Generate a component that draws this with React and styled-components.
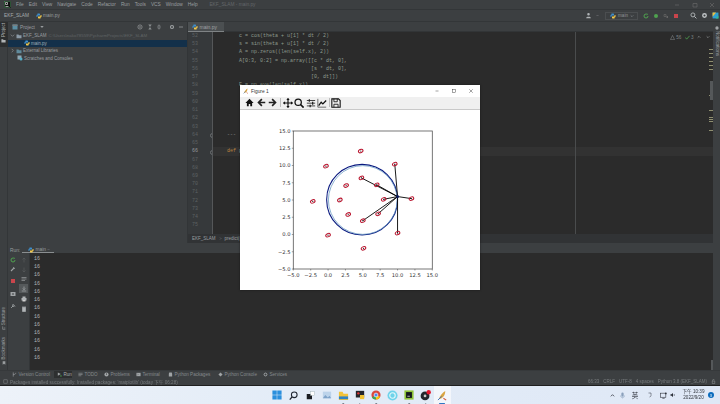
import React from "react";
import styled, { createGlobalStyle } from "styled-components";

const Global = createGlobalStyle`
  html, body { margin: 0; padding: 0; background: #3c3f41; overflow: hidden; }
  * { box-sizing: border-box; }
`;

const UI = `"Liberation Sans", "Noto Sans CJK TC", sans-serif`;
const MONO = `"Liberation Mono", monospace`;

const Screen = styled.div`
  position: relative; width: 720px; height: 404px; display: flex; flex-direction: column;
  overflow: hidden; font-family: ${UI}; color: #9a9ea0; filter: blur(0.35px);
`;
const Ide = styled.div`height: 385px; display: flex; flex-direction: column; background: #3c3f41;`;
const TitleBar = styled.div`
  height: 10px; flex: none; display: flex; align-items: center; padding-left: 4px;
  font-size: 4.8px; border-bottom: 1px solid #333638;
`;
const Menu = styled.div`display: flex; gap: 5px; margin-left: 5px;`;
const WinTitle = styled.span`margin-left: 11.7px; color: #63676a;`;
const WinControls = styled.div`margin-left: auto; display: flex; gap: 11.5px; padding-right: 5px; align-items: center;`;
const NavBar = styled.div`
  height: 12px; flex: none; display: flex; align-items: center; padding-left: 4px; font-size: 4.8px;
  border-bottom: 1px solid #333638; gap: 1px;
`;
const NavCrumb = styled.span`margin-right: 6px; color: #a6aaac;`;
const NavRight = styled.div`margin-left: auto; display: flex; align-items: center; gap: 4px; padding-right: 1px;`;
const NavSpacer = styled.span`width: 0; margin-left: 3px;`;
const RunConfig = styled.div`
  width: 33px; height: 8px; display: flex; align-items: center; gap: 2px; padding-left: 4px;
  margin: 0 1px 0 2px; border: 1px solid #4b4e50; font-size: 4.6px; color: #8f9395;
`;
const Main = styled.div`flex: 1; min-height: 0; display: flex;`;
const LeftStrip = styled.div`
  width: 8px; flex: none; display: flex; flex-direction: column; align-items: center; font-size: 4.5px;
  padding-bottom: 5px; border-right: 1px solid #333638;
`;
const ProjectTab = styled.div`
  width: 8px; height: 25px; background: #2c2e2f; display: flex; flex-direction: column; align-items: center; gap: 1px; padding-top: 1px; color: #b0b4b6;
`;
const VText = styled.span`writing-mode: vertical-rl; transform: rotate(180deg); line-height: 7px; white-space: nowrap;`;
const StripBottom = styled.div`margin-top: auto; display: flex; flex-direction: column; align-items: center; gap: 7px;`;
const StripItem = styled.div`display: flex; flex-direction: column; align-items: center; gap: 1px;`;
const Center = styled.div`flex: 1; min-width: 0; display: flex; flex-direction: column;`;
const TopSplit = styled.div`height: 221px; flex: none; display: flex;`;
const ProjectPanel = styled.div`width: 180px; flex: none; display: flex; flex-direction: column; font-size: 4.5px; border-right: 1px solid #323537;`;
const PanelHead = styled.div`height: 10px; display: flex; align-items: center; padding-left: 4px; gap: 2px; color: #9a9ea0; font-size: 4.8px;`;
const PanelIcons = styled.div`margin-left: auto; display: flex; gap: 3.4px; padding-right: 3px; align-items: center;`;
const TreeRow = styled.div`
  height: 7.5px; display: flex; align-items: center; white-space: nowrap;
  padding-left: ${p => p.$pad}px; gap: 1px; background: ${p => (p.$sel ? "#13304a" : "transparent")};
  color: ${p => (p.$sel ? "#a3b0ba" : "#9a9ea0")};
`;
const TreePath = styled.span`color: #5f6365; margin-left: 1px; font-size: 4.4px;`;
const Editor = styled.div`flex: 1; min-width: 0; display: flex; flex-direction: column;`;
const TabRow = styled.div`height: 10px; flex: none; display: flex; border-bottom: 1px solid #323537;`;
const EditorTab = styled.div`
  width: 36px; height: 10px; background: #4b4f51; display: flex; align-items: center; gap: 1.5px; padding-left: 4px;
  font-size: 5px; color: #a0a4a6; border-bottom: 1.5px solid #7f8385;
`;
const EditorBody = styled.div`flex: 1; min-height: 0; display: flex; overflow: hidden; background: #2b2b2b;`;
const Gutter = styled.div`
  width: 25px; flex: none; background: #36393b; border-right: 1px solid #555759;
  font: 5px/8.24px ${MONO}; padding-left: 4px; color: #5d6163; overflow: hidden;
`;
const GutterNum = styled.div`
  height: 8.24px; position: relative; color: ${p => (p.$active ? "#9a9ea0" : "#5d6163")};
  &::after {
    content: ""; display: ${p => (p.$fold ? "block" : "none")}; position: absolute; left: 17.5px; top: 2.5px;
    width: 3px; height: 3px; border: 0.6px solid #6d7072; border-radius: 50%; background: #36393b;
  }
`;
const Code = styled.div`
  flex: 1; min-width: 0; position: relative; font: 5px/8.24px ${MONO}; color: #8e9b8f; white-space: pre; padding-left: 2px;
`;
const CodeLine = styled.div`
  height: 8.24px; margin-left: -2px; padding-left: 2px;
  background: ${p => (p.$active ? "#323232" : "transparent")};
`;
const Keyword = styled.span`color: #b9823f;`;
const Margin = styled.div`position: absolute; left: 362px; top: 0; bottom: 0; width: 1px; background: #4a4c4d;`;
const Inspect = styled.div`
  position: absolute; right: 3px; top: 1px; height: 8px; display: flex; align-items: center; gap: 1.5px; font: 4.6px ${UI}; color: #7f8385;
`;
const InspectGroup = styled.span`display: flex; align-items: center; gap: 1px; margin-right: 2px;`;
const InspectGap = styled.span`width: 2px;`;
const Markers = styled.svg`position: absolute; right: 0; top: 0; width: 4px; height: 200px;`;
const Crumbs = styled.div`
  height: 9px; flex: none; display: flex; align-items: center; gap: 3px; padding-left: 4px; background: #313335; font-size: 4.5px; color: #9a9ea0;
`;
const RunPanel = styled.div`flex: 1; min-height: 0; display: flex; flex-direction: column;`;
const RunHead = styled.div`height: 10px; flex: none; padding-top: 4px; display: flex; font-size: 4.8px; color: #9a9ea0; align-items: center;`;
const RunLabel = styled.span`margin-left: 2px; width: 12px;`;
const RunTab = styled.div`
  width: 32px; height: 6px; display: flex; align-items: center; gap: 1.5px; padding-left: 6px;
  border-bottom: 1px solid #8a8e90;
`;
const RunBody = styled.div`flex: 1; min-height: 0; display: flex;`;
const ToolCol = styled.div`
  width: ${p => p.$w}px; flex: none; display: flex; flex-direction: column; align-items: center;
  padding-top: 2px; border-right: ${p => (p.$line ? "1px solid #333638" : "none")};
`;
const ToolIcon = styled.div`
  width: 9px; height: 9px; flex: none; display: flex; align-items: center; justify-content: center;
  margin-top: ${p => p.$mt || 0}px; background: ${p => (p.$on ? "#55595b" : "transparent")};
`;
const Console = styled.div`
  flex: 1; min-width: 0; background: #2b2b2b; font: 5px/8.24px ${MONO}; color: #b5b9bb; padding: 2px 0 0 4px; position: relative;
`;
const ConsoleThumb = styled.div`position: absolute; right: 0; bottom: 0; width: 2px; height: 10px; background: #55585a;`;
const RightStrip = styled.div`
  width: 7px; flex: none; display: flex; flex-direction: column; align-items: center; font-size: 4.6px; padding-top: 4px; gap: 1px; color: #9a9ea0;
`;
const VTextDown = styled.span`writing-mode: vertical-rl; line-height: 6px; white-space: nowrap;`;
const ToolBar = styled.div`
  height: 8px; flex: none; display: flex; align-items: center; padding-left: 12px; font-size: 4.6px; color: #85898b; border-top: 1px solid #36393b;
`;
const ToolBtn = styled.div`
  display: flex; align-items: center; gap: 1.5px; height: 7px; flex: none; width: ${p => p.$w}px;
  white-space: nowrap; padding-left: ${p => (p.$on ? 3 : 0)}px; margin-right: ${p => (p.$on ? 6 : 0)}px; margin-left: ${p => (p.$on ? -3 : 0)}px;
  background: ${p => (p.$on ? "#2d2f30" : "transparent")}; color: ${p => (p.$on ? "#a8acae" : "#85898b")};
`;
const Status = styled.div`
  height: 7px; flex: none; display: flex; align-items: center; padding-left: 3px; gap: 2px; font-size: 4.6px; color: #777b7d; white-space: nowrap;
  background: #3c3f41;
`;
const StatusRight = styled.div`margin-left: auto; display: flex; gap: 4px; padding-right: 4px; align-items: center; font-size: 4.5px;`;
const Taskbar = styled.div`
  height: 19px; flex: none; position: relative; display: flex; align-items: center; border-top: 1px solid #1f1f1f;
  background: linear-gradient(90deg, #edf2f9 0%, #e3ecf7 40%, #dfe8f6 100%);
`;
const TaskApps = styled.div`margin-left: 269px; display: flex; align-items: center;`;
const TaskApp = styled.div`
  width: 16.5px; height: 18px; display: flex; align-items: center; justify-content: center; position: relative;
  background: ${p => (p.$on ? "#f3f6fb" : "transparent")};
  &::after {
    content: ""; position: absolute; bottom: 0; left: 50%; transform: translateX(-50%); height: 1px; border-radius: 1px;
    width: ${p => (p.$on ? 6 : p.$dot ? 1.5 : 0)}px; background: ${p => (p.$on ? "#2d78c4" : "#7a828c")};
  }
`;
const Tray = styled.div`margin-left: auto; display: flex; align-items: center; color: #2b2f38; font-size: 6.5px;`;
const TrayIcon = styled.div`width: ${p => p.$w}px; margin-right: ${p => p.$mr || 0}px; display: flex; justify-content: center; align-items: center;`;
const Clock = styled.div`width: 26px; font-size: 4.6px; line-height: 6px; text-align: center; color: #30343c;`;
const Badge = styled.div`
  width: 6.5px; height: 6.5px; margin: 0 6px 0 1px; border-radius: 50%; background: #0b6cbd; color: #fff; font-size: 4px; display: flex; align-items: center; justify-content: center;
`;
const FigureWindow = styled.div`
  position: absolute; left: 240px; top: 85px; width: 240px; height: 205px; background: #fff;
  display: flex; flex-direction: column; box-shadow: 0 0 2px rgba(0,0,0,.5);
`;
const FigTitle = styled.div`height: 12px; flex: none; display: flex; align-items: center; padding-left: 3px; gap: 2px; font-size: 4.8px; color: #333;`;
const FigControls = styled.div`margin-left: auto; display: flex; gap: 11px; padding-right: 6px; align-items: center;`;
const FigToolbar = styled.div`
  height: 12.5px; flex: none; display: flex; align-items: center; padding-left: 4px; background: #f0f0f0; border-bottom: 1px solid #c9c9c9;
`;
const FigBtn = styled.div`width: ${p => p.$w || 11.5}px; display: flex; justify-content: center; align-items: center;`;
const FigSep = styled.div`width: 1px; height: 9px; background: #bdbdbd; margin: 0 1px;`;
const PlotArea = styled.div`flex: 1; min-height: 0; display: flex; justify-content: center;`;
const PlotSvg = styled.svg`width: 240px; height: 180px; display: block;`;

const Ic = ({ s = 6, vb = 12, children, ...r }) => (
  <svg width={s} height={s} viewBox={`0 0 ${vb} ${vb}`} fill="none" {...r}>{children}</svg>
);
const PyIcon = ({ s = 6 }) => (
  <Ic s={s}>
    <path d="M3 1h4l1 1v3H4L3 6v2H1V4l2-1z" fill="#3f8fcc" />
    <path d="M9 11H5L4 10V7h4l1-1V4h2v4L9 9z" fill="#f2c94c" />
  </Ic>
);
const Folder = ({ c = "#8b9aa6", s = 6 }) => (
  <Ic s={s}><path d="M1 3h4l1 1.5h5V10.5H1z" fill={c} /></Ic>
);
const Chev = ({ dir = "down", c = "#8a8e90", s = 5 }) => (
  <Ic s={s}><path d={dir === "down" ? "M2 4l4 4 4-4" : dir === "up" ? "M2 8l4-4 4 4" : "M4 2l4 4-4 4"} stroke={c} strokeWidth="1.8" /></Ic>
);
const Rerun = () => <Ic><path d="M6 2a4 4 0 1 0 4 4" stroke="#4fa24f" strokeWidth="2" /><path d="M7 0l3 2.5L7 5z" fill="#4fa24f" /></Ic>;
const Stop = () => <Ic><rect x="2" y="2" width="8" height="8" fill="#c9454c" /></Ic>;
const Wrench = () => <Ic><path d="M2 10l5-5M7 2.5a2.5 2.5 0 0 0 2.5 2.5" stroke="#a0a4a6" strokeWidth="2.2" /></Ic>;
const Pin = () => <Ic><path d="M2 10l4-4M5 2l5 5M7 3L4.5 6l2 2L9 5" stroke="#a0a4a6" strokeWidth="1.6" /></Ic>;
const Bars = ({ c = "#a0a4a6", s = 6 }) => <Ic s={s}><path d="M1 3h10M1 6h10M1 9h7" stroke={c} strokeWidth="1.3" /></Ic>;

const codeLines = [
  "        c = cos(theta + u[1] * dt / 2)",
  "        s = sin(theta + u[1] * dt / 2)",
  "        A = np.zeros((len(self.x), 2))",
  "        A[0:3, 0:2] = np.array([[c * dt, 0],",
  "                                [s * dt, 0],",
  "                                [0, dt]])",
  "        F = np.eye(len(self.x))",
  "", "", "", "", "",
  "    ---", "",
];

const menus = ["File", "Edit", "View", "Navigate", "Code", "Refactor", "Run", "Tools", "VCS", "Window", "Help"];
const gutterNums = Array.from({ length: 24 }, (_, i) => 52 + i);
const sixteen = Array.from({ length: 13 }, () => "16");

const px = v => 53.3 + (v + 5) * 6.95;
const py = v => 159 - (v + 5) * 6.9;
const marks = [[4.7,12.1],[-0.3,9.9],[9.6,10.2],[4.8,8.2],[7,7.2],[2.6,7.1],[-2.2,4.8],[1.7,5],[8,5.1],[12,5.2],[2.9,2.9],[7.2,3],[5,2],[10,0.2],[0,-0.1],[5.1,-2]];
const rays = [[9.6,10.2],[4.8,8.2],[7,7.2],[8,5.1],[12,5.2],[7.2,3],[5,2],[10,0.2]];
const ticks = [-5,-2.5,0,2.5,5,7.5,10,12.5,15];
const fmt = v => (v < 0 ? "\u2212" : "") + Math.abs(v).toFixed(1);

function Plot() {
  return (
    <PlotSvg viewBox="0 0 240 180">
      <ellipse cx={px(4.9)} cy={py(5.05)} rx={6.95 * 5.1} ry={6.9 * 5.12} fill="none" stroke="#0b1a80" strokeWidth="1.1" />
      <ellipse cx={px(5)} cy={py(5)} rx={6.95 * 4.95} ry={6.9 * 4.98} fill="none" stroke="#5a90bd" strokeWidth="0.7" />
      {rays.map(([x, y], i) => (
        <line key={i} x1={px(10)} y1={py(5.5)} x2={px(x)} y2={py(y)} stroke="#000" strokeWidth="0.9" />
      ))}
      <circle cx={px(10)} cy={py(5.5)} r="1.5" fill="#0b1a5e" />
      {marks.map(([x, y], i) => (
        <g key={i}>
          <ellipse cx={px(x)} cy={py(y)} rx="2.4" ry="1.6" fill="none" stroke="#b8122c" strokeWidth="1" transform={`rotate(-25 ${px(x)} ${py(y)})`} />
          <circle cx={px(x)} cy={py(y)} r="0.6" fill="#222" />
        </g>
      ))}
      <rect x={53.3} y={py(15)} width={139} height={138} fill="none" stroke="#555" strokeWidth="0.8" />
      {ticks.map(t => (
        <g key={t} fill="#333" fontSize="5.2" fontFamily="'DejaVu Sans', sans-serif">
          <line x1={px(t)} x2={px(t)} y1={py(-5)} y2={py(-5) + 1.5} stroke="#444" strokeWidth="0.5" />
          <line x1={53.3} x2={51.8} y1={py(t)} y2={py(t)} stroke="#444" strokeWidth="0.5" />
          <text x={px(t)} y={py(-5) + 7.8} textAnchor="middle">{fmt(t)}</text>
          <text x={50.5} y={py(t) + 1.9} textAnchor="end">{fmt(t)}</text>
        </g>
      ))}
    </PlotSvg>
  );
}

const Feather = ({ s = 7 }) => (
  <Ic s={s}>
    <path d="M2 10C3 6 6 3 9 1c0 3-1 6-4 8z" fill="#d9a441" />
    <path d="M1 11l4-4" stroke="#3b6fb5" strokeWidth="1" />
    <path d="M7 9l3 2" stroke="#d05a3c" strokeWidth="1.2" />
  </Ic>
);

export default function App() {
  return (
    <Screen>
      <Global />
      <Ide>
        <TitleBar>
          <Ic s={7} vb={7}>
            <rect width="7" height="7" fill="#111" />
            <rect x="0.5" y="0.5" width="6" height="6" fill="none" stroke="#58b26d" strokeWidth="0.4" />
            <path d="M1.5 1.5h2v2h-2zM1.5 5.5h3" stroke="#ddd" strokeWidth="0.7" />
          </Ic>
          <Menu>{menus.map(m => <span key={m}>{m}</span>)}</Menu>
          <WinTitle>EKF_SLAM - main.py</WinTitle>
          <WinControls>
            <Ic s={6}><path d="M2 6h8" stroke="#777" strokeWidth="1" /></Ic>
            <Ic s={6}><path d="M2 3h8v7H2z" stroke="#777" strokeWidth="1" /></Ic>
            <Ic s={6}><path d="M2 2l8 8M10 2l-8 8" stroke="#777" strokeWidth="1" /></Ic>
          </WinControls>
        </TitleBar>
        <NavBar>
          <NavCrumb>EKF_SLAM</NavCrumb>
          <PyIcon />
          <span>main.py</span>
          <NavRight>
            <Ic s={7}><path d="M6 1.5a2.2 2.2 0 1 1 0 4.4 2.2 2.2 0 0 1 0-4.4zM2 10.5c0-3 8-3 8 0z" fill="#b0b4b6" /></Ic>
            <Chev s={3} />
            <RunConfig><PyIcon /><span>main</span><Chev s={4} /></RunConfig>
            <Rerun />
            <Ic><circle cx="6" cy="6" r="4" fill="#4fa24f" /></Ic>
            <Ic><path d="M2 3h4v4H2z" stroke="#666" strokeWidth="1.4" /><path d="M7 6h3v4H7z" fill="#666" /></Ic>
            <Stop />
            <NavSpacer />
            <Ic s={7}><circle cx="5" cy="5" r="3.4" stroke="#b8bcbe" strokeWidth="1.5" /><path d="M7.5 7.5L11 11" stroke="#b8bcbe" strokeWidth="1.7" /></Ic>
            <Ic s={7}><circle cx="6" cy="6" r="3" stroke="#c0c4c6" strokeWidth="2.4" /></Ic>
            <Ic s={7}><path d="M1 1h10v10H1z" fill="#2f9fd0" /><path d="M1 1h6L1 8z" fill="#f0c040" /><path d="M11 11H6l5-5z" fill="#35c08a" /></Ic>
          </NavRight>
        </NavBar>
        <Main>
          <LeftStrip>
            <ProjectTab>
              <VText>Project</VText>
              <Folder c="#b0b4b6" s={5} />
            </ProjectTab>
            <StripBottom>
              <StripItem>
                <VText>Structure</VText>
                <Ic s={4}><path d="M2 1v9h8M5 6h5" stroke="#9a9ea0" strokeWidth="1.8" /></Ic>
              </StripItem>
              <StripItem>
                <VText>Bookmarks</VText>
                <Ic s={4}><path d="M2 1h8v10L6 8l-4 3z" fill="#9a9ea0" /></Ic>
              </StripItem>
            </StripBottom>
          </LeftStrip>
          <Center>
            <TopSplit>
              <ProjectPanel>
                <PanelHead>
                  <Ic s={6}><rect x="1" y="1" width="10" height="10" fill="#5b8ea3" /><rect x="1" y="1" width="10" height="3" fill="#7a7e80" /></Ic>
                  <span>Project</span>
                  <Ic s={4} style={{ marginLeft: 3 }}><path d="M1 3h10l-5 6z" fill="#9a9ea0" /></Ic>
                  <PanelIcons>
                    <Ic s={6}><circle cx="6" cy="6" r="4.2" stroke="#a0a4a6" strokeWidth="1.3" /><circle cx="6" cy="6" r="1.4" fill="#a0a4a6" /></Ic>
                    <Ic s={6}><path d="M3 1.5h6M3 10.5h6M6 2v8M4 4l2-2 2 2M4 8l2 2 2-2" stroke="#a0a4a6" strokeWidth="1.1" /></Ic>
                    <Ic s={6}><path d="M2 6h8M6 1v3M6 8v3M4 2.5l2 2 2-2M4 9.5l2-2 2 2" stroke="#a0a4a6" strokeWidth="1.1" /></Ic>
                    <Ic s={6} style={{ marginLeft: 3 }}><circle cx="6" cy="6" r="3" stroke="#a0a4a6" strokeWidth="2.2" /></Ic>
                    <Ic s={6}><path d="M2 6h8" stroke="#a0a4a6" strokeWidth="1.4" /></Ic>
                  </PanelIcons>
                </PanelHead>
                <TreeRow $pad={2}>
                  <Chev /><Folder />
                  <span>EKF_SLAM</span>
                  <TreePath>C:\Users\nako78559\PycharmProjects\EKF_SLAM</TreePath>
                </TreeRow>
                <TreeRow $pad={16} $sel><PyIcon /><span>main.py</span></TreeRow>
                <TreeRow $pad={2}>
                  <Chev dir="right" /><Folder c="#5f8a9c" /><span>External Libraries</span>
                </TreeRow>
                <TreeRow $pad={9}>
                  <Ic s={6}><rect x="1" y="1" width="8" height="8" fill="#8fa7b3" /><circle cx="8" cy="8" r="3" fill="#56b0c9" /></Ic>
                  <span>Scratches and Consoles</span>
                </TreeRow>
              </ProjectPanel>
              <Editor>
                <TabRow>
                  <EditorTab><PyIcon /><span>main.py</span></EditorTab>
                </TabRow>
                <EditorBody>
                  <Gutter>
                    {gutterNums.map(n => <GutterNum key={n} $active={n === 66} $fold={n === 64 || n === 66}>{n}</GutterNum>)}
                  </Gutter>
                  <Code>
                    {codeLines.map((l, i) => <CodeLine key={i}>{l}</CodeLine>)}
                    <CodeLine $active><Keyword>    def</Keyword> predict(self):</CodeLine>
                    <Margin />
                    <Inspect>
                      <InspectGroup>
                        <Ic s={5}><path d="M6 1l5 10H1z" stroke="#8a8e90" strokeWidth="1.2" /></Ic>56
                      </InspectGroup>
                      <InspectGroup>
                        <Ic s={5}><path d="M1 6l3 4 7-8" stroke="#4fa24f" strokeWidth="2" /></Ic>3
                      </InspectGroup>
                      <Chev dir="up" c="#a0a4a6" s={4} />
                      <InspectGap />
                      <Chev c="#a0a4a6" s={4} />
                    </Inspect>
                    <Markers viewBox="0 0 4 200">
                      {[17, 21, 25, 29, 33, 37, 63, 78, 85, 87, 89, 98].map(y => (
                        <rect key={y} x="0" y={y} width="4" height="1" fill="#8e8e70" />
                      ))}
                      <rect x="1" y="49" width="3" height="19" fill="#55585a" />
                    </Markers>
                  </Code>
                </EditorBody>
                <Crumbs><span>EKF_SLAM</span><Chev dir="right" s={3} /><span>predict(self, u, dt)</span></Crumbs>
              </Editor>
            </TopSplit>
            <RunPanel>
              <RunHead>
                <RunLabel>Run:</RunLabel>
                <RunTab><PyIcon /><span>main</span><Ic s={3}><path d="M2 8l4-4 4 4" stroke="#8a8e90" strokeWidth="1.5" /></Ic></RunTab>
              </RunHead>
              <RunBody>
                <ToolCol $w={10}>
                  <ToolIcon><Rerun /></ToolIcon>
                  <ToolIcon><Wrench /></ToolIcon>
                  <ToolIcon $mt={3}><Stop /></ToolIcon>
                  <ToolIcon $mt={4}><Ic><rect x="1" y="2" width="10" height="8" fill="#a0a4a6" /><rect x="5" y="4" width="2" height="4" fill="#3c3f41" /></Ic></ToolIcon>
                  <ToolIcon $mt={3}><Pin /></ToolIcon>
                </ToolCol>
                <ToolCol $w={12} $line>
                  <ToolIcon><Ic><path d="M6 11V2M3 5l3-3 3 3" stroke="#595c5e" strokeWidth="1.3" /></Ic></ToolIcon>
                  <ToolIcon $mt={1}><Ic><path d="M6 1v9M3 7l3 3 3-3" stroke="#595c5e" strokeWidth="1.3" /></Ic></ToolIcon>
                  <ToolIcon><Bars /></ToolIcon>
                  <ToolIcon $mt={1} $on><Ic><path d="M6 1v6M3.5 5L6 7.5 8.5 5M1.5 10h9" stroke="#b0b4b6" strokeWidth="1.3" /></Ic></ToolIcon>
                  <ToolIcon $mt={1}><Ic><rect x="1" y="4" width="10" height="5" fill="#b0b4b6" /><rect x="3" y="1" width="6" height="3" fill="#b0b4b6" /><rect x="3" y="8" width="6" height="3" fill="#d0d0d0" /></Ic></ToolIcon>
                  <ToolIcon $mt={1}><Ic><path d="M3 3h6v8H3zM2 2h8" stroke="#b0b4b6" strokeWidth="1.3" fill="#b0b4b6" /></Ic></ToolIcon>
                </ToolCol>
                <Console>
                  {sixteen.map((t, i) => <div key={i}>{t}</div>)}
                  <ConsoleThumb />
                </Console>
              </RunBody>
            </RunPanel>
          </Center>
          <RightStrip>
            <Ic s={4}><circle cx="6" cy="6" r="5" fill="#a0a4a6" /></Ic>
            <VTextDown>Notifications</VTextDown>
          </RightStrip>
        </Main>
        <ToolBar>
          <ToolBtn $w={45}><Ic s={5}><path d="M3 1v10M3 6c4 0 6-1 6-4" stroke="#a0a4a6" strokeWidth="1.5" /></Ic>Version Control</ToolBtn>
          <ToolBtn $w={18} $on><Ic s={5}><path d="M2 1l7 4-7 4z" fill="#a0a4a6" /><rect x="8" y="8" width="3" height="3" fill="#4fa24f" /></Ic>Run</ToolBtn>
          <ToolBtn $w={26}><Bars s={5} />TODO</ToolBtn>
          <ToolBtn $w={32}><Ic s={5}><circle cx="6" cy="6" r="5" fill="#a0a4a6" /><rect x="5.2" y="3" width="1.6" height="4" fill="#3c3f41" /></Ic>Problems</ToolBtn>
          <ToolBtn $w={32}><Ic s={5}><rect x="1" y="2" width="10" height="8" fill="#a0a4a6" /><path d="M3 4l2 2-2 2" stroke="#3c3f41" /></Ic>Terminal</ToolBtn>
          <ToolBtn $w={50}><Ic s={5}><path d="M2 4h8v7H2zM3 1h6l1 3H2z" fill="#a0a4a6" /></Ic>Python Packages</ToolBtn>
          <ToolBtn $w={45}><Ic s={5}><path d="M6 1l5 5-5 5-5-5z" fill="#a0a4a6" /></Ic>Python Console</ToolBtn>
          <ToolBtn $w={30}><Ic s={5}><circle cx="6" cy="6" r="3.4" stroke="#a0a4a6" strokeWidth="2.4" /></Ic>Services</ToolBtn>
        </ToolBar>
        <Status>
          <Ic s={5}><rect x="2" y="2" width="8" height="8" stroke="#8a8e90" strokeWidth="1.2" /></Ic>
          <span>Packages installed successfully: Installed packages: 'matplotlib' (today 下午 06:28)</span>
          <StatusRight>
            <span>66:33</span><span>CRLF</span><span>UTF-8</span><span>4 spaces</span><span>Python 3.8 (EKF_SLAM)</span>
            <Ic s={5}><path d="M3 5h6v6H3zM4 5V3a2 2 0 0 1 4 0" stroke="#9a9ea0" strokeWidth="1.2" /></Ic>
          </StatusRight>
        </Status>
      </Ide>
      <Taskbar>
        <TaskApps>
          <TaskApp>
            <Ic s={10}>
              <path d="M0.5 0.5h5.2v5.2H.5zM6.3 0.5h5.2v5.2H6.3zM.5 6.3h5.2v5.2H.5zM6.3 6.3h5.2v5.2H6.3z" fill="#2a8fdd" />
            </Ic>
          </TaskApp>
          <TaskApp><Ic s={9}><circle cx="7" cy="5" r="3.8" stroke="#1f2530" strokeWidth="1.4" /><path d="M4 8l-3 3.5" stroke="#1f2530" strokeWidth="1.6" /></Ic></TaskApp>
          <TaskApp><Ic s={9}><rect x="1" y="4" width="7" height="7" fill="#1b1d22" /><rect x="6" y="1" width="5" height="5" fill="#fff" stroke="#9aa" strokeWidth=".5" /></Ic></TaskApp>
          <TaskApp><Ic s={10}><rect x="1" y="2" width="10" height="8" fill="#bcd3ea" /><path d="M1 10l3-4 3 3 2-2 2 3z" fill="#7fa3c9" /></Ic></TaskApp>
          <TaskApp $dot><Ic s={11}><path d="M1 2h4l1 2h5v7H1z" fill="#f3c33a" /><rect x="1" y="7" width="10" height="3" fill="#2f83c6" /></Ic></TaskApp>
          <TaskApp $dot><Ic s={10}><rect x="1" y="1" width="10" height="8" fill="#23252b" /><circle cx="4" cy="4" r="1.4" fill="#d33" /><path d="M6 6l5 0v5H6z" fill="#f1c232" /></Ic></TaskApp>
          <TaskApp $dot>
            <Ic s={10}>
              <circle cx="6" cy="6" r="5.5" fill="#d9463d" />
              <path d="M6 6L1 9a5.5 5.5 0 0 0 5 2.5z" fill="#3aa757" />
              <path d="M6 6l5 2a5.5 5.5 0 0 1-5 3.5z" fill="#f4c20d" />
              <circle cx="6" cy="6" r="2.3" fill="#4a8af4" stroke="#fff" strokeWidth=".8" />
            </Ic>
          </TaskApp>
          <TaskApp><Ic s={11}><circle cx="6" cy="6" r="5.5" fill="#6fd3ea" /><circle cx="6" cy="6" r="3" stroke="#e6f8fc" strokeWidth="1.2" /></Ic></TaskApp>
          <TaskApp $dot><Ic s={10}><rect x="0.5" y="0.5" width="11" height="11" fill="#8fc43a" /><rect x="2.5" y="2.5" width="7" height="7" fill="#14181c" /><path d="M4 7.5h3" stroke="#fff" strokeWidth=".8" /></Ic></TaskApp>
          <TaskApp $dot><Ic s={11}><circle cx="5.5" cy="6.5" r="4.8" fill="#22252b" /><circle cx="5.5" cy="6.5" r="1.5" fill="#ccc" /><circle cx="9.5" cy="2.5" r="2.4" fill="#e3162d" /></Ic></TaskApp>
          <TaskApp $on><Feather s={11} /></TaskApp>
        </TaskApps>
        <Tray>
          <TrayIcon $w={8}><Chev dir="up" c="#2b2f38" s={5} /></TrayIcon>
          <TrayIcon $w={12}><Ic s={7}><rect x="4" y="1" width="4" height="7" rx="2" fill="#8aa0bb" /><path d="M2.5 6a3.5 3.5 0 0 0 7 0M6 10v1" stroke="#8aa0bb" strokeWidth="1" /></Ic></TrayIcon>
          <TrayIcon $w={13}>英</TrayIcon>
          <TrayIcon $w={16}><Ic s={6}><path d="M3 2h5C8 6 9 9 5 10" stroke="#2b2f38" strokeWidth="1" /></Ic></TrayIcon>
          <TrayIcon $w={12}><Ic s={7}><rect x="1" y="2" width="9" height="7" stroke="#2b2f38" strokeWidth="1" /><path d="M4 11h4" stroke="#2b2f38" /><circle cx="10" cy="2.5" r="1.5" fill="#2b2f38" /></Ic></TrayIcon>
          <TrayIcon $w={7} $mr={4}><Ic s={6}><path d="M1 4.5h2L6 2v8L3 7.5H1z" fill="#2b2f38" /><path d="M8 4a3 3 0 0 1 0 4" stroke="#2b2f38" /></Ic></TrayIcon>
          <Clock><div>下午 10:39</div><div>2022/9/20</div></Clock>
          <Badge>3</Badge>
        </Tray>
      </Taskbar>
      <FigureWindow>
        <FigTitle>
          <Feather s={6} />
          <span>Figure 1</span>
          <FigControls>
            <Ic s={6}><path d="M3 6h6" stroke="#333" strokeWidth="0.9" /></Ic>
            <Ic s={6}><rect x="2.5" y="2.5" width="7" height="7" stroke="#333" strokeWidth="0.9" /></Ic>
            <Ic s={6}><path d="M2.5 2.5l7 7M9.5 2.5l-7 7" stroke="#333" strokeWidth="0.9" /></Ic>
          </FigControls>
        </FigTitle>
        <FigToolbar>
          <FigBtn><Ic s={9}><path d="M6 1L0.5 6.5H2.5V11H5V8h2v3h2.5V6.5H11.5z" fill="#111" /></Ic></FigBtn>
          <FigBtn><Ic s={9}><path d="M11 6H3M6.5 1.5L2 6l4.5 4.5" stroke="#222" strokeWidth="2.2" /></Ic></FigBtn>
          <FigBtn><Ic s={9}><path d="M1 6h8M5.5 1.5L10 6l-4.500 4.500" stroke="#222" strokeWidth="2.2" /></Ic></FigBtn>
          <FigSep />
          <FigBtn $w={12}><Ic s={10}><path d="M6 .5v11M.5 6h11" stroke="#111" strokeWidth="1.4" /><path d="M6 0L4 2.5h4zM6 12l-2-2.5h4zM0 6l2.5-2v4zM12 6L9.5 4v4z" fill="#111" /></Ic></FigBtn>
          <FigBtn><Ic s={10}><circle cx="5" cy="5" r="3.8" stroke="#111" strokeWidth="1.5" /><path d="M7.8 7.8L11.5 11.5" stroke="#111" strokeWidth="2" /></Ic></FigBtn>
          <FigBtn><Ic s={10}><path d="M1 3h10M1 6.2h10M1 9.5h10" stroke="#222" strokeWidth="1" /><path d="M4 1.5v3M8 4.5v3.5M5 8v3" stroke="#222" strokeWidth="1.5" /></Ic></FigBtn>
          <FigBtn><Ic s={10}><path d="M1 1v10h10" stroke="#555" strokeWidth="1" /><path d="M2 9l3-4 2 2 4-4" stroke="#111" strokeWidth="1.5" /></Ic></FigBtn>
          <FigSep />
          <FigBtn $w={10}><Ic s={10}><path d="M1 1h8l2 2v8H1z" stroke="#111" strokeWidth="1.3" /><path d="M3.5 1v3.5h4V1M3.5 11V7.5h5V11" stroke="#111" strokeWidth="1" /></Ic></FigBtn>
        </FigToolbar>
        <PlotArea><Plot /></PlotArea>
      </FigureWindow>
    </Screen>
  );
}
